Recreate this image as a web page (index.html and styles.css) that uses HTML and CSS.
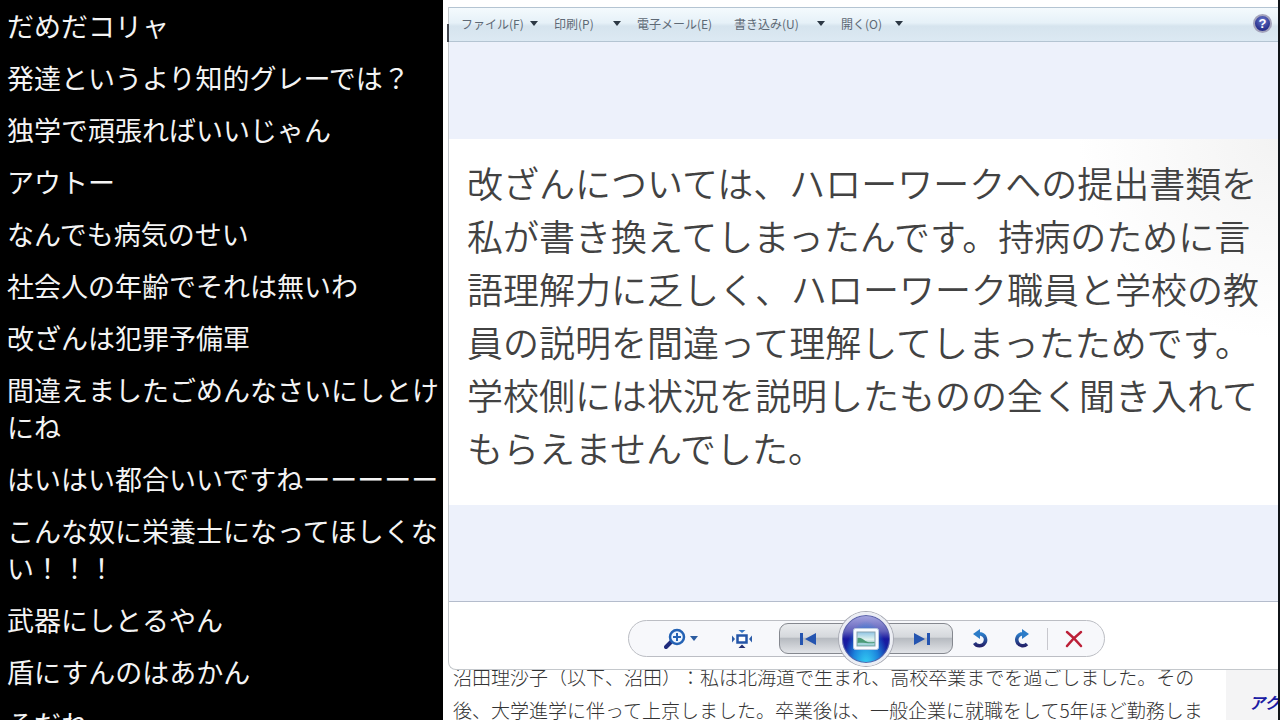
FILE: index.html
```html
<!DOCTYPE html>
<html lang="ja">
<head>
  <meta charset="UTF-8">
  <title>フォト ビューアー</title>
  <link rel="stylesheet" href="styles.css">
</head>
<body>
<section class="chat">
  <p>だめだコリャ</p>
  <p>発達というより知的グレーでは？</p>
  <p>独学で頑張ればいいじゃん</p>
  <p>アウトー</p>
  <p>なんでも病気のせい</p>
  <p>社会人の年齢でそれは無いわ</p>
  <p>改ざんは犯罪予備軍</p>
  <p>間違えましたごめんなさいにしとけにね</p>
  <p>はいはい都合いいですねーーーーー</p>
  <p>こんな奴に栄養士になってほしくない！！！</p>
  <p>武器にしとるやん</p>
  <p>盾にすんのはあかん</p>
  <p>そだね</p>
</section>

<main class="desktop">
  <div class="viewer">
    <nav class="menu">
      <div class="menu-items">
        <button type="button">ファイル(F)<span class="caret"></span></button>
        <button type="button">印刷(P)<span class="caret"></span></button>
        <button type="button">電子メール(E)</button>
        <button type="button">書き込み(U)<span class="caret"></span></button>
        <button type="button">開く(O)<span class="caret"></span></button>
      </div>
      <button type="button" class="help" aria-label="ヘルプ">?</button>
    </nav>

    <div class="canvas">
      <p class="photo">改ざんについては、ハローワークへの提出書類を<br>私が書き換えてしまったんです。持病のために言<br>語理解力に乏しく、ハローワーク職員と学校の教<br>員の説明を間違って理解してしまったためです。<br>学校側には状況を説明したものの全く聞き入れて<br>もらえませんでした。</p>
    </div>

    <div class="controls">
      <div class="pill">
        <button type="button" class="zoom" aria-label="表示サイズの変更">
          <svg width="22" height="22" viewBox="0 0 22 22" fill="none">
            <path d="M2 19l6-6" stroke="#202c7c" stroke-width="4" stroke-linecap="round"/>
            <circle cx="13" cy="9" r="7" fill="#eef6ff" stroke="#2462b4" stroke-width="2.5"/>
            <path d="M13 5v8M9 9h8" stroke="#2462b4" stroke-width="2"/>
          </svg>
          <span class="caret blue"></span>
        </button>
        <button type="button" class="fit" aria-label="ウィンドウに合わせる">
          <svg width="22" height="20" viewBox="0 0 22 20">
            <rect x="6.5" y="6.5" width="9" height="7" fill="#fff" stroke="#2455a8" stroke-width="2.5"/>
            <path d="M7.500 1h7L11 4z" fill="#3878c4"/>
            <path d="M7.500 19h7L11 15.500z" fill="#242f72"/>
            <path d="M1 6.500v7L4 10z" fill="#2c5ca8"/>
            <path d="M21 6.500v7L18 10z" fill="#2c5ca8"/>
          </svg>
        </button>
        <button type="button" class="step prev" aria-label="前へ">
          <svg width="18" height="14" viewBox="0 0 18 14" fill="#2454b0">
            <path d="M1 1h3v12H1zM17 1v12L6 7z"/>
          </svg>
        </button>
        <button type="button" class="play" aria-label="スライド ショーの再生">
          <svg width="26" height="22" viewBox="0 0 26 22">
            <defs>
              <linearGradient id="sky" x1="0" y1="0" x2="0" y2="1">
                <stop offset="0" stop-color="#8fc4e4"/>
                <stop offset="0.55" stop-color="#e2f3ee"/>
                <stop offset="1" stop-color="#4c9aa4"/>
              </linearGradient>
            </defs>
            <rect x="0.5" y="0.5" width="25" height="21" rx="2" fill="#f8fbff" stroke="#b8c8e0"/>
            <rect x="4" y="4" width="18" height="14" fill="url(#sky)" stroke="#88a4b0"/>
            <path d="M4.5 10c3-1 5 1 8 3s6 1 9 1v3.5h-17z" fill="#4b9a76"/>
            <path d="M4.5 15c5-1 11 1 17 0v2.5h-17z" fill="#a4d4dc"/>
          </svg>
        </button>
        <button type="button" class="step next" aria-label="次へ">
          <svg width="18" height="14" viewBox="0 0 18 14" fill="#2454b0">
            <path d="M14 1h3v12h-3zM1 1v12l11-6z"/>
          </svg>
        </button>
        <button type="button" class="tool" aria-label="左に回転">
          <svg width="20" height="20" viewBox="0 0 20 20">
            <defs>
              <linearGradient id="turn" x1="0" y1="0" x2="0" y2="1">
                <stop offset="0" stop-color="#2c7cc8"/>
                <stop offset="1" stop-color="#24246c"/>
              </linearGradient>
            </defs>
            <path d="M7 5h3a6 6 0 1 1-6.500 9" fill="none" stroke="url(#turn)" stroke-width="3.5"/>
            <path d="M2 5l7-5v10z" fill="#2c7cc8"/>
          </svg>
        </button>
        <button type="button" class="tool" aria-label="右に回転">
          <svg width="20" height="20" viewBox="0 0 20 20">
            <path d="M13 5h-3a6 6 0 1 0 6 10" fill="none" stroke="url(#turn)" stroke-width="3.5"/>
            <path d="M18 5l-7-5v10z" fill="#2c7cc8"/>
          </svg>
        </button>
        <span class="divider"></span>
        <button type="button" class="tool" aria-label="削除">
          <svg width="18" height="18" viewBox="0 0 18 18" fill="none" stroke="#bc2038" stroke-linecap="round">
            <path d="M2 2c5 4 9 8 14 14" stroke-width="2.5"/>
            <path d="M16 2C11 6 6 11 2 16" stroke-width="2.5"/>
          </svg>
        </button>
      </div>
    </div>
  </div>

  <div class="page">
    <p class="article">沼田理沙子（以下、沼田）：私は北海道で生まれ、高校卒業までを過ごしました。その<br>後、大学進学に伴って上京しました。卒業後は、一般企業に就職をして5年ほど勤務しま</p>
    <aside class="side"><a href="#">アク</a></aside>
  </div>
</main>
</body>
</html>
```
FILE: styles.css
```css
* {
  box-sizing: border-box;
}
body {
  margin: 0;
  height: 100vh;
  display: grid;
  grid-template-columns: 443px 1fr;
  overflow: hidden;
  background: #fff;
  font-family: "Noto Sans CJK JP", sans-serif;
  text-spacing-trim: space-all;
}
p {
  margin: 0;
}
button {
  border: 0;
  padding: 0;
  background: none;
  font: inherit;
  color: inherit;
}

/* comments */
.chat {
  display: flex;
  flex-direction: column;
  gap: 15px;
  padding: 7px 0 0 7px;
  min-height: 0;
  overflow: hidden;
  background: #000;
  color: #f4f4f4;
  font-size: 27px;
  line-height: 37px;
}
.chat p {
  flex-shrink: 0;
}

/* photo viewer */
.desktop {
  min-width: 0;
  min-height: 0;
  display: flex;
  flex-direction: column;
  padding: 7px 0 0 5px;
  border-right: 2px solid #101418;
  overflow: hidden;
}
.viewer {
  position: relative;
  z-index: 1;
  flex-shrink: 0;
  background: #fff;
  border: 1px solid #c4c8cc;
  border-width: 0 0 1px 1px;
  border-bottom-left-radius: 8px;
}
.viewer::before {
  content: "";
  position: absolute;
  left: -2px;
  top: 17px;
  width: 2px;
  height: 18px;
  background: #40444c;
}
.menu {
  display: flex;
  justify-content: space-between;
  align-items: center;
  height: 35px;
  padding: 0 6px 2px 12px;
  border: 1px solid #b4c4d2;
  border-width: 1px 0;
  background: linear-gradient(#f4fafd, #e6f1f8 45%, #d6e4ee 55%, #dce9f3);
  color: #5e6975;
  font-size: 12px;
}
.menu-items {
  display: grid;
  grid-template-columns: 77px 67px 81px 91px 62px;
  gap: 16px;
}
.menu-items button {
  display: flex;
  justify-content: space-between;
  align-items: center;
  white-space: nowrap;
}
.caret {
  border: 4px solid transparent;
  border-top: 5px solid #2c3844;
  border-bottom: 0;
}
.caret.blue {
  border-top-color: #2c5ca0;
}
.help {
  width: 19px;
  height: 19px;
  border: 2px solid #a4a4bc;
  border-radius: 50%;
  background: radial-gradient(circle at 50% 30%, #6878cc, #28308c 70%);
  color: #fff;
  font: bold 13px/15px "Liberation Sans", sans-serif;
}
.canvas {
  padding: 97px 0 96px;
  background: #edf1fb;
}
.photo {
  padding: 17px 0 31px 18px;
  background: radial-gradient(circle at 100% 0, #f3f3f3, #fff 200px);
  color: #424242;
  font-size: 36px;
  font-weight: 350;
  line-height: 53px;
  white-space: nowrap;
}

/* playback controls */
.controls {
  display: flex;
  justify-content: center;
  align-items: center;
  height: 68px;
  padding: 6px 0 0 6px;
  border-top: 1px solid #b4bccc;
}
.pill {
  display: flex;
  align-items: center;
  height: 37px;
  padding: 0 10px 0 16px;
  border: 1px solid #bcbec4;
  border-radius: 19px;
  background: #f7f8fb;
}
.pill button {
  display: flex;
  justify-content: center;
  align-items: center;
}
.pill .zoom {
  width: 72px;
  gap: 4px;
}
.pill .fit {
  width: 50px;
  margin-right: 12px;
}
.step {
  width: 66px;
  height: 31px;
}
.pill .step {
  border: 1px solid #85888f;
  background: linear-gradient(#e9ebee, #d5d8dc 45%, #b7bbc1 50%, #e2e4e8);
}
.pill .prev {
  margin-right: -6px;
  padding-right: 8px;
  border-radius: 9px 0 0 9px;
}
.pill .next {
  margin: 0 8px 0 -6px;
  padding-left: 4px;
  border-radius: 0 9px 9px 0;
}
.pill .play {
  position: relative;
  flex-shrink: 0;
  width: 54px;
  height: 54px;
  border: 3px solid #eceef4;
  border-radius: 50%;
  background: radial-gradient(ellipse at 50% 105%, #38dcf8, #1c84dc 35%, transparent 60%), linear-gradient(#b4b4e8, #6464bc 35%, #1818a0 50%, #1434a4);
  background-origin: border-box;
  box-shadow: 0 0 0 1px #a8aab4, inset 0 0 0 1px #5c64a8;
}
.tool {
  width: 40px;
  height: 30px;
}
.divider {
  width: 1px;
  height: 22px;
  margin: 0 6px;
  background: #c8c8ce;
}

/* web page behind the viewer */
.page {
  flex: 1;
  display: flex;
  margin-top: -10px;
}
.article {
  flex: 1;
  padding-left: 5px;
  color: #333;
  font-size: 19px;
  font-weight: 300;
  line-height: 33px;
  white-space: nowrap;
}
.side {
  width: 52px;
  padding: 26px 0 0 23px;
  overflow: hidden;
  background: #f4f4f5;
  font-size: 16px;
  line-height: 33px;
  white-space: nowrap;
}
.side a {
  color: #1c1ca4;
  font-weight: 700;
  font-style: italic;
  text-decoration: none;
}
```
